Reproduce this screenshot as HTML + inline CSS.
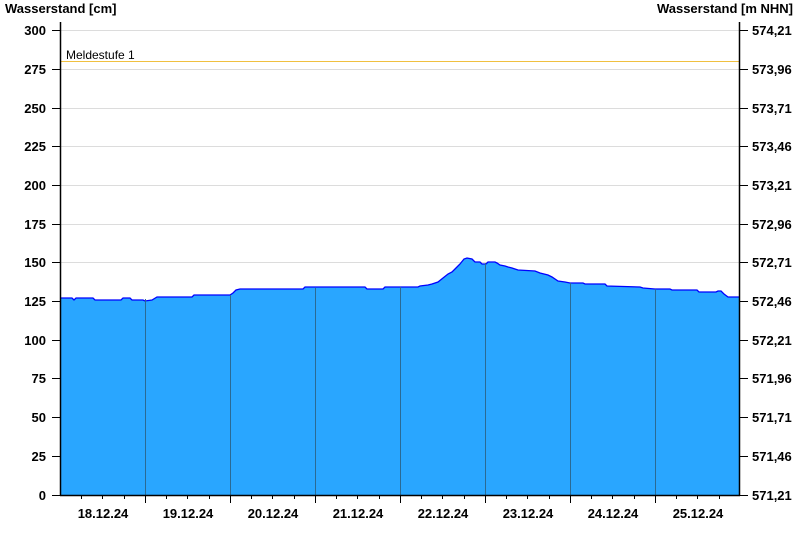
<!DOCTYPE html>
<html><head><meta charset="utf-8"><style>
body{margin:0;background:#fff;width:800px;height:550px;overflow:hidden}
svg{display:block;font-family:"Liberation Sans",Arial,sans-serif}
.t{font-size:13px;font-weight:bold;fill:#000}
</style></head><body>
<svg width="800" height="550" viewBox="0 0 800 550">
<text x="5" y="13" class="t">Wasserstand [cm]</text>
<text x="793" y="13" class="t" text-anchor="end">Wasserstand [m NHN]</text>
<g stroke="#dcdcdc" stroke-width="1">
<line x1="60" x2="740" y1="30.5" y2="30.5"/><line x1="60" x2="740" y1="69.5" y2="69.5"/><line x1="60" x2="740" y1="108.5" y2="108.5"/><line x1="60" x2="740" y1="146.5" y2="146.5"/><line x1="60" x2="740" y1="185.5" y2="185.5"/><line x1="60" x2="740" y1="224.5" y2="224.5"/><line x1="60" x2="740" y1="262.5" y2="262.5"/>
</g>
<line x1="60" x2="740" y1="61.5" y2="61.5" stroke="#f0c040" stroke-width="1"/>
<text x="66" y="59" font-size="12" fill="#000">Meldestufe 1</text>
<polygon fill="#29a6ff" points="60,495 60,298 72,298 74,300 76,298 93,298 95,300 121,300 123,298 130,298 132,300 143,300 145,301 152,300 157,297 192,297 194,295 230,295 233,293 236,290 240,289 303,289 305,287 365,287 367,289 383,289 385,287 418,287 420,286 428,285 432,284 438,282 443,278 448,274 452,272 456,268 460,264 464,259 467,258 472,259 475,262 480,262 482,264 486,264 488,262 495,262 497,263 500,265 505,266 508,267 512,268 518,270 535,271 540,273 548,275 552,277 558,281 565,282 570,283 583,283 585,284 605,284 607,286 640,287 643,288 655,289 670,289 672,290 697,290 699,292 716,292 718,291 721,291 724,294 728,297 740,297 740,495"/>
<polyline fill="none" stroke="#0000ff" stroke-width="1.3" points="60,298 72,298 74,300 76,298 93,298 95,300 121,300 123,298 130,298 132,300 143,300 145,301 152,300 157,297 192,297 194,295 230,295 233,293 236,290 240,289 303,289 305,287 365,287 367,289 383,289 385,287 418,287 420,286 428,285 432,284 438,282 443,278 448,274 452,272 456,268 460,264 464,259 467,258 472,259 475,262 480,262 482,264 486,264 488,262 495,262 497,263 500,265 505,266 508,267 512,268 518,270 535,271 540,273 548,275 552,277 558,281 565,282 570,283 583,283 585,284 605,284 607,286 640,287 643,288 655,289 670,289 672,290 697,290 699,292 716,292 718,291 721,291 724,294 728,297 740,297"/>
<g stroke="#2a6a94" stroke-width="1">
<line x1="145.5" x2="145.5" y1="299" y2="495"/><line x1="230.5" x2="230.5" y1="295" y2="495"/><line x1="315.5" x2="315.5" y1="288" y2="495"/><line x1="400.5" x2="400.5" y1="287" y2="495"/><line x1="485.5" x2="485.5" y1="263" y2="495"/><line x1="570.5" x2="570.5" y1="283" y2="495"/><line x1="655.5" x2="655.5" y1="289" y2="495"/>
</g>
<g stroke="#000" stroke-width="1.5">
<line x1="60.5" x2="60.5" y1="22" y2="496"/><line x1="739.5" x2="739.5" y1="22" y2="496"/><line x1="60" x2="740" y1="495.5" y2="495.5"/>
</g>
<g stroke="#000" stroke-width="1">
<line x1="52" x2="60" y1="30.5" y2="30.5"/><line x1="52" x2="60" y1="69.5" y2="69.5"/><line x1="52" x2="60" y1="108.5" y2="108.5"/><line x1="52" x2="60" y1="146.5" y2="146.5"/><line x1="52" x2="60" y1="185.5" y2="185.5"/><line x1="52" x2="60" y1="224.5" y2="224.5"/><line x1="52" x2="60" y1="262.5" y2="262.5"/><line x1="52" x2="60" y1="301.5" y2="301.5"/><line x1="52" x2="60" y1="340.5" y2="340.5"/><line x1="52" x2="60" y1="378.5" y2="378.5"/><line x1="52" x2="60" y1="417.5" y2="417.5"/><line x1="52" x2="60" y1="456.5" y2="456.5"/><line x1="52" x2="60" y1="495.5" y2="495.5"/>
<line x1="740" x2="748" y1="30.5" y2="30.5"/><line x1="740" x2="748" y1="69.5" y2="69.5"/><line x1="740" x2="748" y1="108.5" y2="108.5"/><line x1="740" x2="748" y1="146.5" y2="146.5"/><line x1="740" x2="748" y1="185.5" y2="185.5"/><line x1="740" x2="748" y1="224.5" y2="224.5"/><line x1="740" x2="748" y1="262.5" y2="262.5"/><line x1="740" x2="748" y1="301.5" y2="301.5"/><line x1="740" x2="748" y1="340.5" y2="340.5"/><line x1="740" x2="748" y1="378.5" y2="378.5"/><line x1="740" x2="748" y1="417.5" y2="417.5"/><line x1="740" x2="748" y1="456.5" y2="456.5"/><line x1="740" x2="748" y1="495.5" y2="495.5"/>
<path d="M145.5 495v8M230.5 495v8M315.5 495v8M400.5 495v8M485.5 495v8M570.5 495v8M655.5 495v8M81.5 495v4M102.5 495v4M124.5 495v4M166.5 495v4M187.5 495v4M209.5 495v4M251.5 495v4M272.5 495v4M294.5 495v4M336.5 495v4M357.5 495v4M379.5 495v4M421.5 495v4M442.5 495v4M464.5 495v4M506.5 495v4M527.5 495v4M549.5 495v4M591.5 495v4M612.5 495v4M634.5 495v4M676.5 495v4M697.5 495v4M719.5 495v4"/>
</g>
<g text-anchor="end">
<text x="46" y="35" class="t">300</text><text x="46" y="74" class="t">275</text><text x="46" y="113" class="t">250</text><text x="46" y="151" class="t">225</text><text x="46" y="190" class="t">200</text><text x="46" y="229" class="t">175</text><text x="46" y="267" class="t">150</text><text x="46" y="306" class="t">125</text><text x="46" y="345" class="t">100</text><text x="46" y="383" class="t">75</text><text x="46" y="422" class="t">50</text><text x="46" y="461" class="t">25</text><text x="46" y="500" class="t">0</text>
</g>
<g>
<text x="752" y="35" class="t">574,21</text><text x="752" y="74" class="t">573,96</text><text x="752" y="113" class="t">573,71</text><text x="752" y="151" class="t">573,46</text><text x="752" y="190" class="t">573,21</text><text x="752" y="229" class="t">572,96</text><text x="752" y="267" class="t">572,71</text><text x="752" y="306" class="t">572,46</text><text x="752" y="345" class="t">572,21</text><text x="752" y="383" class="t">571,96</text><text x="752" y="422" class="t">571,71</text><text x="752" y="461" class="t">571,46</text><text x="752" y="500" class="t">571,21</text>
</g>
<g text-anchor="middle">
<text x="103" y="518" class="t">18.12.24</text><text x="188" y="518" class="t">19.12.24</text><text x="273" y="518" class="t">20.12.24</text><text x="358" y="518" class="t">21.12.24</text><text x="443" y="518" class="t">22.12.24</text><text x="528" y="518" class="t">23.12.24</text><text x="613" y="518" class="t">24.12.24</text><text x="698" y="518" class="t">25.12.24</text>
</g>
</svg>
</body></html>
